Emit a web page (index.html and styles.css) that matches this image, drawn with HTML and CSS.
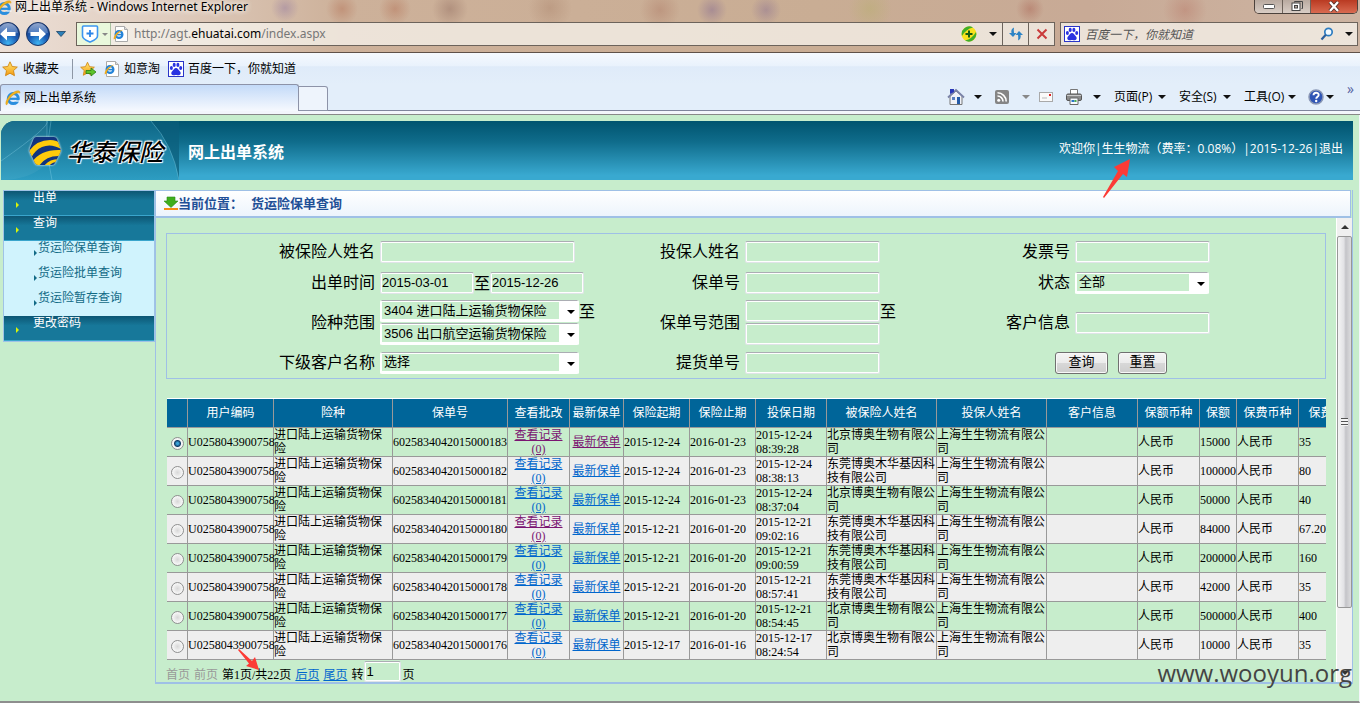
FILE: index.html
```html
<!DOCTYPE html>
<html lang="zh-CN">
<head>
<meta charset="utf-8">
<title>网上出单系统</title>
<link rel="stylesheet" href="styles.css">
</head>
<body>
<svg class="defs" aria-hidden="true">
  <defs>
    <radialGradient id="orb" cx="50%" cy="90%" r="90%"><stop offset="0" stop-color="#3fb4f2"/><stop offset=".45" stop-color="#1c5db5"/><stop offset="1" stop-color="#16357a"/></radialGradient>
    <linearGradient id="gloss" x1="0" y1="0" x2="0" y2="1"><stop offset="0" stop-color="#d5e2f5"/><stop offset="1" stop-color="#5d87c8"/></linearGradient>
    <linearGradient id="gold" x1="0" y1="0" x2="0" y2="1"><stop offset="0" stop-color="#ffe873"/><stop offset="1" stop-color="#f39a12"/></linearGradient>
    <symbol id="ie" viewBox="0 0 16 16">
      <circle cx="8.3" cy="8.6" r="5" fill="none" stroke="#2a8ede" stroke-width="3"/>
      <path d="M5 8.8h8.6" stroke="#2a8ede" stroke-width="2.2"/>
      <path d="M10.5 11h5" stroke="#fff" stroke-width="1.2"/>
      <path d="M1.2 14.8C-.5 12 4 4.500 9 2c3-1.600 6.500-1.800 6 1.200C12 1 3.500 7.500 2.800 12.500c-.2 1.200 0 2-1.600 2.300z" fill="#f4b51e" stroke="#c98a10" stroke-width=".4"/>
    </symbol>
    <symbol id="iepage" viewBox="0 0 16 16">
      <path d="M2.500.5h9l3 3v12h-12z" fill="#fff" stroke="#aaa"/><path d="M11.500.5v3h3" fill="#ddd" stroke="#aaa"/>
      <circle cx="6" cy="8.500" r="3.400" fill="none" stroke="#2383d8" stroke-width="2.200"/><path d="M4 8.600h5.600" stroke="#2383d8" stroke-width="1.600"/>
      <path d="M.8 13.500C0 10 4 5 10.500 3.500 6 6 3 9 2.500 12.500z" fill="#f0aa18"/>
    </symbol>
    <symbol id="star" viewBox="0 0 16 16"><path d="M8 .8l2.200 4.700 5.100.6-3.800 3.500 1 5.100L8 12.200l-4.500 2.500 1-5.100L.7 6.100l5.100-.6z" fill="url(#gold)" stroke="#d18714" stroke-width=".9"/></symbol>
    <symbol id="paw" viewBox="0 0 16 16"><rect x=".5" y=".5" width="15" height="15" fill="#fff" stroke="#2a35c8"/><g fill="#2932e1"><ellipse cx="3.400" cy="7" rx="1.500" ry="2"/><ellipse cx="6.200" cy="3.900" rx="1.500" ry="2.100"/><ellipse cx="9.900" cy="3.900" rx="1.500" ry="2.100"/><ellipse cx="12.700" cy="7" rx="1.500" ry="2"/><path d="M8 7c1.800 0 2.400 2 4 3.500 1.300 1.300.8 3.700-1.200 3.700-1.200 0-1.800-.3-2.800-.3s-1.600.3-2.800.3c-2 0-2.500-2.400-1.200-3.700C5.600 9 6.200 7 8 7z"/></g></symbol>
  </defs>
</svg>

<div class="browser">
  <div class="glass">
    <div class="titlebar">
      <svg class="i16 title-icon"><use href="#ie"/></svg>
      <span class="title-text">网上出单系统 - Windows Internet Explorer</span>
      <div class="winbtns">
        <button class="win" aria-label="最小化"><svg width="12" height="6"><rect x=".5" y=".5" width="11" height="4" rx="1" fill="#fff" stroke="#555"/></svg></button>
        <button class="win" aria-label="还原"><svg width="12" height="11"><path d="M3.500 1.500v-1h8v7h-1" fill="none" stroke="#444"/><rect x="1" y="2" width="8" height="7.500" fill="#fff" stroke="#444"/><rect x="3.500" y="4.500" width="3" height="2.500" fill="#b9aaa0" stroke="#444"/></svg></button>
        <button class="win close" aria-label="关闭"><svg width="12" height="11"><path d="M2 1l8 9M10 1L2 10" stroke="#56322c" stroke-width="4"/><path d="M2 1l8 9M10 1L2 10" stroke="#fff" stroke-width="2.300"/></svg></button>
      </div>
    </div>
    <div class="navbar">
      <button class="orb back" aria-label="后退"><svg width="26" height="26" viewBox="0 0 26 26"><circle cx="13" cy="13" r="11.500" fill="url(#orb)" stroke="#1c3766"/><path d="M3 12a10 10 0 0 1 20 0q-10 2-20 0z" fill="url(#gloss)" opacity=".65"/><path d="M5 13l7-6.500v4.500h8.500v4H12v4.500z" fill="#fff"/></svg></button>
      <button class="orb" aria-label="前进"><svg width="26" height="26" viewBox="0 0 26 26"><circle cx="13" cy="13" r="11.500" fill="url(#orb)" stroke="#1c3766"/><path d="M3 12a10 10 0 0 1 20 0q-10 2-20 0z" fill="url(#gloss)" opacity=".65"/><path d="M21 13l-7-6.500v4.500H5.500v4H14v4.500z" fill="#fff"/></svg></button>
      <svg class="history" width="10" height="6"><path d="M.5.5h9L5 5.500z" fill="#2b7fb8" stroke="#1c4466" stroke-width=".8"/></svg>
      <div class="address">
        <span class="shield"><svg width="18" height="18" viewBox="0 0 18 18"><path d="M2.500 1h13q1 0 1 1v9c0 3-4 4.500-7.500 6-3.500-1.500-7.500-3-7.500-6V2q0-1 1-1z" fill="#fff" stroke="#3c96f0" stroke-width="1.600"/><path d="M9 5v7M5.500 8.500h7" stroke="#2c86e8" stroke-width="1.800"/></svg><i class="tri small dim"></i></span>
        <svg class="i16"><use href="#iepage"/></svg>
        <span class="url" role="textbox" aria-label="地址">http://agt.<b>ehuatai.com</b>/index.aspx</span>
        <svg class="i16 boost" viewBox="0 0 16 16"><circle cx="8" cy="8" r="7.500" fill="#f7e11c"/><path d="M1 10A7.500 7.500 0 0 1 12 1.500Q5 3 1 10zM15 6a7.500 7.500 0 0 1-11 8.500Q11 13 15 6z" fill="#3fae2a"/><path d="M8 4.500v7M4.500 8h7" stroke="#155c12" stroke-width="2"/></svg>
        <i class="tri addr-drop"></i>
        <button class="cell" aria-label="刷新"><svg width="16" height="16" viewBox="0 0 16 16"><path d="M6 1.500Q2.500 3 3.500 7H1l4 4 3.500-4H6Q5.500 4 6 1.500z" fill="#2d84c6"/><path d="M10 14.500Q13.500 13 12.500 9H15l-4-4-3.500 4H10Q10.500 12 10 14.500z" fill="#2d84c6"/></svg></button>
        <button class="cell" aria-label="停止"><svg width="12" height="12"><path d="M1.500 1.500l9 9M10.500 1.500l-9 9" stroke="#c93a3a" stroke-width="2"/></svg></button>
      </div>
      <div class="search">
        <svg class="i16"><use href="#paw"/></svg>
        <input class="search-input" type="text" placeholder="百度一下，你就知道" aria-label="搜索">
        <svg width="14" height="14" viewBox="0 0 14 14"><circle cx="8.500" cy="5" r="3.700" fill="#f4faff" stroke="#2d7cc0" stroke-width="1.700"/><path d="M5.800 7.800L1.500 12.500" stroke="#2d5f9c" stroke-width="2.200"/></svg>
        <i class="tri"></i>
      </div>
    </div>
  </div>
  <div class="favorites">
    <svg class="i16"><use href="#star"/></svg><span class="fav-label">收藏夹</span>
    <span class="divider"></span>
    <svg class="i16" viewBox="0 0 16 16"><use href="#star" width="15" height="16"/><path d="M6 9.500h5V7l5 4-5 4v-2.500H6z" fill="#5dc32c" stroke="#267d16" stroke-width=".8"/></svg>
    <a class="fav" href="#"><svg class="i16"><use href="#iepage"/></svg>如意淘</a>
    <a class="fav" href="#"><svg class="i16"><use href="#paw"/></svg>百度一下，你就知道</a>
  </div>
  <div class="tabs">
    <button class="tab"><svg class="i16"><use href="#ie"/></svg>网上出单系统</button>
    <button class="newtab" aria-label="新选项卡"></button>
    <div class="commands">
      <button class="cmd wide" aria-label="主页"><svg width="18" height="18" viewBox="0 0 18 18"><path d="M3 8v8.500h12V8L9 3z" fill="#f0f2f8" stroke="#777"/><path d="M1 9.500L9 2l8 7.500" fill="none" stroke="#7b83a8" stroke-width="1.800"/><path d="M3 1h4v3L3 6z" fill="#2a39b8"/><rect x="5" y="9" width="3" height="3" fill="#5b7fc0"/><rect x="10" y="9" width="3" height="7" fill="#245ba8"/></svg><i class="tri"></i></button>
      <button class="cmd wide feed" aria-label="源"><svg width="14" height="14" viewBox="0 0 14 14"><rect width="14" height="14" rx="2" fill="#858585"/><circle cx="3.700" cy="10.300" r="1.500" fill="#fff"/><path d="M2.500 6a5.500 5.500 0 0 1 5.500 5.500M2.500 2.800a8.700 8.700 0 0 1 8.700 8.700" fill="none" stroke="#fff" stroke-width="1.600"/></svg><i class="tri dim"></i></button>
      <button class="cmd" aria-label="阅读邮件"><svg width="14" height="10"><rect x=".5" y=".5" width="13" height="9" fill="#fafafa" stroke="#a9a9a9"/><rect x="10" y="2" width="2" height="2" fill="#e02222"/><path d="M3 6h5" stroke="#bbb"/></svg></button>
      <button class="cmd wide" aria-label="打印"><svg width="16" height="16" viewBox="0 0 16 16"><path d="M4.500.5h7v6h-7z" fill="#fff" stroke="#777"/><rect x=".5" y="5" width="15" height="6.500" rx="1.500" fill="#8b8b8b" stroke="#555"/><path d="M1 6.500h14" stroke="#c9c9c9"/><path d="M4 9h8v6.500H4z" fill="#f7fbff" stroke="#666"/><path d="M5.500 12h3" stroke="#2b74c8" stroke-width="2"/><path d="M8.500 12h2" stroke="#4caf50" stroke-width="2"/></svg><i class="tri"></i></button>
      <button class="cmd text">页面(P)<i class="tri"></i></button>
      <button class="cmd text">安全(S)<i class="tri"></i></button>
      <button class="cmd text">工具(O)<i class="tri"></i></button>
      <button class="cmd help" aria-label="帮助"><svg width="16" height="16" viewBox="0 0 16 16"><circle cx="8" cy="8" r="7" fill="#2f55b5" stroke="#8a97b5" stroke-width="1.500"/><path d="M5.500 6.200C5.500 3 10.700 3 10.700 6c0 1.800-2.500 1.800-2.500 3.800" fill="none" stroke="#fff" stroke-width="1.900"/><circle cx="8.200" cy="12" r="1.200" fill="#fff"/></svg><i class="tri"></i></button>
      <span class="more">»</span>
    </div>
  </div>
</div>

<div class="page">
  <header class="banner">
    <div class="logo">
      <svg class="swoosh" viewBox="0 0 178 59" preserveAspectRatio="none"><path d="M0 0H46V42Q30 59 0 59z" fill="#fff" opacity=".05"/><path d="M150 0Q172 24 178 59V0z" fill="#04506c" opacity=".55"/><path d="M150 0Q172 24 178 59M46 0V22M0 40Q50 5 46 0M51 59Q44 30 50 0" fill="none" stroke="#8fd6ea" stroke-width="1" opacity=".35"/></svg>
      <svg class="mark" width="32" height="30" viewBox="0 0 32 30"><defs><clipPath id="hex"><path d="M7 1h18q2 0 3 2l3.500 10q.5 2-.5 4l-5 10q-1 2-3 2H9q-2 0-3-2L.8 16q-.6-1.500 0-3.500L4.500 3Q5.500 1 7 1z"/></clipPath></defs><g clip-path="url(#hex)"><rect width="32" height="30" fill="#11357f"/><path d="M0 15Q8 4 21 4Q28 4 32 8V13Q22 7 13 11Q6 14 2 22z" fill="#fecb0b"/><path d="M3 26Q12 13 32 14V20Q17 19 10 30H4z" fill="#fecb0b"/><path d="M15 30Q20 23 30 23L28 26Q23 26 20 30z" fill="#fecb0b"/></g></svg>
      <span class="brand">华泰保险</span>
    </div>
    <h1 class="system">网上出单系统</h1>
    <div class="user">欢迎你|生生物流（费率：0.08%）|2015-12-26|<a href="#">退出</a></div>
    <svg class="note note-user" width="28" height="40" viewBox="0 0 28 40"><path d="M27 0L11 8l4 4L0 38l1 1L20 15l4 3z" fill="#fc3b36"/></svg>
  </header>

  <div class="columns">
    <nav class="menu">
      <a class="group" href="#">出单</a>
      <a class="group" href="#">查询</a>
      <a class="sub" href="#">货运险保单查询</a>
      <a class="sub" href="#">货运险批单查询</a>
      <a class="sub" href="#">货运险暂存查询</a>
      <a class="group" href="#">更改密码</a>
    </nav>

    <main class="panel">
      <div class="crumb">
        <svg width="14" height="15" viewBox="0 0 14 15"><path d="M3 1h8v4h3L7 11.500 0 5h3z" fill="#3fae1c" stroke="#2c8a14" stroke-width=".6"/><path d="M0 13h14" stroke="#f38b12" stroke-width="2"/></svg>
        <span>当前位置：</span><span class="here">货运险保单查询</span>
      </div>
      <div class="scroller">
        <div class="content">
          <form class="filters">
            <label for="insured">被保险人姓名</label><div><input class="box long" id="insured" type="text"></div>
            <label for="holder">投保人姓名</label><div><input class="box" id="holder" type="text"></div>
            <label for="invoice">发票号</label><div><input class="box" id="invoice" type="text"></div>

            <label for="from">出单时间</label><div class="line"><input class="box date" id="from" type="text" value="2015-03-01"><span class="to">至</span><input class="box date" type="text" value="2015-12-26" aria-label="截止时间"></div>
            <label for="policy">保单号</label><div><input class="box" id="policy" type="text"></div>
            <label for="state">状态</label><div><span class="drop short"><select id="state"><option>全部</option></select></span></div>

            <label for="kind">险种范围</label><div class="stack"><div class="line"><span class="drop"><select id="kind"><option>3404 进口陆上运输货物保险</option></select></span><span class="to">至</span></div><span class="drop"><select aria-label="险种范围止"><option>3506 出口航空运输货物保险</option></select></span></div>
            <label for="pfrom">保单号范围</label><div class="stack"><div class="line"><input class="box" id="pfrom" type="text"><span class="to">至</span></div><input class="box" type="text" aria-label="保单号范围止"></div>
            <label for="info">客户信息</label><div><input class="box" id="info" type="text"></div>

            <label for="client">下级客户名称</label><div><span class="drop"><select id="client"><option>选择</option></select></span></div>
            <label for="bill">提货单号</label><div><input class="box" id="bill" type="text"></div>
            <div class="actions"><button class="push" type="button">查询</button><button class="push" type="reset">重置</button></div>
          </form>

          <div class="grid-wrap">
          <table class="grid">
            <colgroup><col class="w-pick"><col class="w-user"><col class="w-kind"><col class="w-no"><col class="w-log"><col class="w-new"><col class="w-day"><col class="w-day"><col class="w-time"><col class="w-name"><col class="w-name"><col class="w-info"><col class="w-cur"><col class="w-sum"><col class="w-cur"><col class="w-fee"></colgroup>
            <thead><tr><th></th><th>用户编码</th><th>险种</th><th>保单号</th><th>查看批改</th><th>最新保单</th><th>保险起期</th><th>保险止期</th><th>投保日期</th><th>被保险人姓名</th><th>投保人姓名</th><th>客户信息</th><th>保额币种</th><th>保额</th><th>保费币种</th><th>保费</th></tr></thead>
            <tbody>
              <tr><td class="c"><input type="radio" name="row" aria-label="选择 183" checked></td><td>U0258043900758</td><td>进口陆上运输货物保险</td><td>6025834042015000183</td><td class="c"><a class="seen" href="#">查看记录<br>(0)</a></td><td class="c"><a class="seen" href="#">最新保单</a></td><td>2015-12-24</td><td>2016-01-23</td><td>2015-12-24 08:39:28</td><td>北京博奥生物有限公司</td><td>上海生生物流有限公司</td><td></td><td>人民币</td><td>15000</td><td>人民币</td><td>35</td></tr>
              <tr><td class="c"><input type="radio" name="row" aria-label="选择 182"></td><td>U0258043900758</td><td>进口陆上运输货物保险</td><td>6025834042015000182</td><td class="c"><a href="#">查看记录<br>(0)</a></td><td class="c"><a href="#">最新保单</a></td><td>2015-12-24</td><td>2016-01-23</td><td>2015-12-24 08:38:13</td><td>东莞博奥木华基因科技有限公司</td><td>上海生生物流有限公司</td><td></td><td>人民币</td><td>100000</td><td>人民币</td><td>80</td></tr>
              <tr><td class="c"><input type="radio" name="row" aria-label="选择 181"></td><td>U0258043900758</td><td>进口陆上运输货物保险</td><td>6025834042015000181</td><td class="c"><a href="#">查看记录<br>(0)</a></td><td class="c"><a href="#">最新保单</a></td><td>2015-12-24</td><td>2016-01-23</td><td>2015-12-24 08:37:04</td><td>北京博奥生物有限公司</td><td>上海生生物流有限公司</td><td></td><td>人民币</td><td>50000</td><td>人民币</td><td>40</td></tr>
              <tr><td class="c"><input type="radio" name="row" aria-label="选择 180"></td><td>U0258043900758</td><td>进口陆上运输货物保险</td><td>6025834042015000180</td><td class="c"><a class="seen" href="#">查看记录<br>(0)</a></td><td class="c"><a href="#">最新保单</a></td><td>2015-12-21</td><td>2016-01-20</td><td>2015-12-21 09:02:16</td><td>东莞博奥木华基因科技有限公司</td><td>上海生生物流有限公司</td><td></td><td>人民币</td><td>84000</td><td>人民币</td><td>67.20</td></tr>
              <tr><td class="c"><input type="radio" name="row" aria-label="选择 179"></td><td>U0258043900758</td><td>进口陆上运输货物保险</td><td>6025834042015000179</td><td class="c"><a href="#">查看记录<br>(0)</a></td><td class="c"><a href="#">最新保单</a></td><td>2015-12-21</td><td>2016-01-20</td><td>2015-12-21 09:00:59</td><td>东莞博奥木华基因科技有限公司</td><td>上海生生物流有限公司</td><td></td><td>人民币</td><td>200000</td><td>人民币</td><td>160</td></tr>
              <tr><td class="c"><input type="radio" name="row" aria-label="选择 178"></td><td>U0258043900758</td><td>进口陆上运输货物保险</td><td>6025834042015000178</td><td class="c"><a href="#">查看记录<br>(0)</a></td><td class="c"><a href="#">最新保单</a></td><td>2015-12-21</td><td>2016-01-20</td><td>2015-12-21 08:57:41</td><td>东莞博奥木华基因科技有限公司</td><td>上海生生物流有限公司</td><td></td><td>人民币</td><td>42000</td><td>人民币</td><td>35</td></tr>
              <tr><td class="c"><input type="radio" name="row" aria-label="选择 177"></td><td>U0258043900758</td><td>进口陆上运输货物保险</td><td>6025834042015000177</td><td class="c"><a href="#">查看记录<br>(0)</a></td><td class="c"><a href="#">最新保单</a></td><td>2015-12-21</td><td>2016-01-20</td><td>2015-12-21 08:54:45</td><td>北京博奥生物有限公司</td><td>上海生生物流有限公司</td><td></td><td>人民币</td><td>500000</td><td>人民币</td><td>400</td></tr>
              <tr><td class="c"><input type="radio" name="row" aria-label="选择 176"></td><td>U0258043900758</td><td>进口陆上运输货物保险</td><td>6025834042015000176</td><td class="c"><a href="#">查看记录<br>(0)</a></td><td class="c"><a href="#">最新保单</a></td><td>2015-12-17</td><td>2016-01-16</td><td>2015-12-17 08:24:54</td><td>北京博奥生物有限公司</td><td>上海生生物流有限公司</td><td></td><td>人民币</td><td>10000</td><td>人民币</td><td>35</td></tr>
            </tbody>
          </table>
          </div>
          <div class="pager">
            <span class="off">首页</span><span class="off">前页</span><span>第1页/共22页</span><a href="#">后页</a><a href="#">尾页</a><label for="goto">转</label><input class="box goto" id="goto" type="text" value="1"><span>页</span>
            <svg class="note note-pager" width="22" height="22" viewBox="0 0 22 22"><path d="M0 1L1 0l13 12 3-4 4 13-13-4 3-2.500z" fill="#fc3b36"/></svg>
          </div>
        </div>
        <div class="scrollbar" aria-hidden="true">
          <i class="arrow up"></i>
          <div class="track"><div class="thumb"><i class="grip"></i></div></div>
          <i class="arrow down"></i>
        </div>
      </div>
    </main>
  </div>
  <div class="watermark">www.wooyun.org</div>
</div>
</body>
</html>
```
FILE: styles.css
```css
* { box-sizing: border-box; }
body {
  margin: 0;
  min-height: 100vh;
  display: flex;
  flex-direction: column;
  background: #c7edcc;
  font: 12px/16px "Open Sans", "Noto Sans CJK SC", sans-serif;
  color: #000;
  overflow-x: hidden;
}
button { font: inherit; color: inherit; padding: 0; border: 0; background: none; }
a { color: inherit; text-decoration: none; }
svg { flex: none; display: block; }
.defs { position: absolute; width: 0; height: 0; }
.i16 { width: 16px; height: 16px; }
.tri { flex: none; width: 0; height: 0; border: 4px solid transparent; border-top-color: #111; border-bottom: 0; }
.tri.dim { border-top-color: #888; }
.tri.small { border-width: 3px 3px 0; }

/* browser frame */
.glass {
  background:
    radial-gradient(circle at 285px 8px, #8e74a070, transparent 14px),
    radial-gradient(circle at 342px 9px, #b0684c68, transparent 16px),
    radial-gradient(circle at 395px 9px, #b0684c68, transparent 16px),
    radial-gradient(circle at 450px 9px, #8a645868, transparent 18px),
    radial-gradient(circle at 550px 8px, #a8806868, transparent 22px),
    radial-gradient(circle at 660px 10px, #a8705c60, transparent 20px),
    radial-gradient(circle at 712px 10px, #7a60906c, transparent 15px),
    radial-gradient(circle at 766px 10px, #7a609060, transparent 15px),
    radial-gradient(circle at 870px 9px, #b4b06868, transparent 22px),
    radial-gradient(circle at 1030px 9px, #a8605070, transparent 14px),
    radial-gradient(circle at 1185px 10px, #b0605050, transparent 22px),
    linear-gradient(90deg, #ecdfd6, #e0cdbf 12%, #cdb19a 25%, #c9ad94 60%, #c8aa96 80%, #cdb4a2);
  border-bottom: 1px solid #5f5148;
}
.titlebar { display: flex; height: 16px; align-items: flex-start; }
.title-icon { margin-left: -4px; }
.title-text { margin-left: 3px; font: 12px/14px "Noto Sans", "Noto Sans CJK SC", sans-serif; text-shadow: 0 0 6px #fff, 0 0 6px #fff; }
.winbtns { margin: 0 2px 0 auto; display: flex; border: 1px solid #4c423c; border-top: 0; border-radius: 0 0 5px 5px; overflow: hidden; }
.win { width: 28px; height: 13px; display: flex; justify-content: center; align-items: center; background: linear-gradient(#b9aaa0, #d9cdc5); border-right: 1px solid #6d625a; }
.win.close { width: 46px; border: 0; background: linear-gradient(#b93a22, #d96a50); }
.navbar { display: flex; align-items: center; height: 36px; padding-right: 2px; }
.orb { margin-right: 4px; }
.orb.back { margin-left: -5px; }
.history { margin: 0 10px 0 1px; }
.address, .search { display: flex; align-items: center; height: 24px; border: 1px solid #6c635b; background: #f7f4eebf; }
.address { flex: 1; }
.shield { display: flex; align-items: center; align-self: stretch; gap: 3px; width: 34px; padding-left: 4px; margin-right: 2px; background: #e9f8dc; border-right: 1px solid #a9c2a0; }
.url { flex: 1; margin-left: 5px; font: 12px/16px "Noto Sans", sans-serif; color: #777; }
.url b { font-weight: 400; color: #000; }
.boost { margin-right: 12px; }
.addr-drop { margin-right: 5px; }
.cell { width: 26px; align-self: stretch; display: flex; align-items: center; justify-content: center; border-left: 1px solid #6c635b; }
.search { width: 298px; margin-left: 5px; padding: 0 4px 0 3px; gap: 5px; }
.search > .tri { margin-left: 6px; }
.search-input { flex: 1; min-width: 0; border: 0; padding: 0; background: none; font: italic 12px/16px "Noto Sans CJK SC", sans-serif; }
.search-input::placeholder { color: #555; }
.favorites { display: flex; align-items: center; height: 31px; padding-left: 2px; background: linear-gradient(#f5f9fe, #e9f2fc 42%, #dfebf9 44%, #e3eefa); }
.fav-label { margin-left: 5px; }
.divider { width: 1px; height: 20px; margin: 0 7px 0 13px; background: #8d97a5; }
.fav { display: flex; align-items: center; gap: 4px; margin-left: 8px; }
.tabs { display: flex; align-items: flex-end; height: 31px; background: linear-gradient(#e3eefa 26px, #7f849c 26px, #7f849c 27px, #f3f5fb 27px, #f3f5fb 30px, #999 30px, #777 31px); padding-bottom: 4px; }
.tab { width: 299px; height: 27px; padding-left: 4px; display: flex; align-items: center; gap: 3px; border: 1px solid #8d93a8; border-bottom: 0; border-radius: 3px 3px 0 0; background: linear-gradient(#c3daf8, #f6f9fe); }
.newtab { width: 29px; height: 25px; border: 1px solid #8d93a8; border-left: 0; border-radius: 0 3px 0 0; background: #eef4fc; }
.commands { margin-left: auto; display: flex; height: 28px; align-items: center; }
.cmd { display: flex; align-items: center; justify-content: space-between; margin-right: 13px; }
.cmd.wide { width: 35px; }
.cmd.feed { margin-right: 9px; }
.cmd.text { width: 52px; }
.cmd.help { width: 26px; margin-left: -1px; }
.more { width: 13px; align-self: flex-start; line-height: 12px; font-size: 14px; color: #5560a0; }

/* application page */
.page { position: relative; flex: 1; display: flex; flex-direction: column; padding: 6px 6px 17px 1px; border-right: 1px solid #f4f6fa; border-bottom: 2px solid #8e8e8e; }
.banner { position: relative; display: flex; align-items: center; height: 59px; border-radius: 14px 0 0 0; background: linear-gradient(#00546f, #0f6c8b 35%, #39a9d0 92%); color: #fff; }
.logo { position: relative; display: flex; align-items: center; align-self: stretch; width: 178px; padding-left: 28px; border-radius: 14px 0 0 0; overflow: hidden; background: linear-gradient(#0d6685, #2d9dc2); }
.swoosh { position: absolute; inset: 0; width: 100%; height: 100%; }
.mark { position: relative; filter: drop-shadow(0 0 1px #fff); }
.brand { position: relative; margin-left: 6px; font: italic 500 24px/32px "Noto Sans CJK SC", sans-serif; color: #000; text-shadow: 1px 1px 1px #fff, -1px -1px 1px #fff, 1px -1px 1px #fff, -1px 1px 1px #fff; }
.system { margin: 0 0 0 9px; font: bold 16px/24px "Noto Sans CJK SC", sans-serif; }
.user { margin: 0 10px 4px auto; }
.note { position: absolute; pointer-events: none; }
.note-user { right: 222px; top: 38px; z-index: 2; }
.columns { flex: 1; display: flex; align-items: flex-start; padding: 10px 0 0 2px; }
.menu { flex: none; width: 152px; border: 1px solid #9fc3e6; font-family: "Noto Sans CJK SC", sans-serif; }
.menu a { display: block; position: relative; height: 25px; line-height: 12px; }
.group { padding-left: 29px; color: #fff; background: linear-gradient(#0c5673, #17789a 40%, #17789a); border-bottom: 1px solid #3aa5cc; }
.sub { padding-left: 34px; color: #126a86; background: #d0f3fd; }
.menu a::before { content: ""; position: absolute; left: 12px; top: 11px; border: 3px solid transparent; border-left-color: #d8f20a; border-right: 0; }
.menu .sub::before { left: 30px; top: 9px; border-left-color: #126a86; }
.panel { flex: 1; align-self: stretch; min-width: 0; display: flex; flex-direction: column; border: 1px solid #9fc0e6; border-top: 0; border-bottom-width: 2px; }
.crumb { display: flex; align-items: center; height: 28px; margin-right: 1px; padding: 0 8px 1px; border: solid #9fc0e6; border-width: 1px 1px 2px 0; background: linear-gradient(#fff, #edf4fc); font: bold 13px/18px "Noto Sans CJK SC", sans-serif; color: #1f4f96; }
.here { margin-left: 8px; }
.scroller { flex: 1; display: flex; }
.content { flex: 1; min-width: 0; padding: 15px 10px 0 10px; }
.filters { display: grid; grid-template-columns: 208fr 260fr 95fr 220fr 100fr 250fr; grid-template-rows: 31px 31px 49px 31px; column-gap: 5px; align-items: center; padding-top: 2px; border: 1px solid #9fc0e6; font: 16px/20px "Noto Sans CJK SC", sans-serif; }
.filters > label { padding-bottom: 3px; text-align: right; white-space: nowrap; }
.filters .to { padding-bottom: 2px; }
.filters > div { display: flex; }
.filters .line { display: flex; align-items: center; }
.filters .stack { flex-direction: column; gap: 1px; }
.box { width: 135px; height: 22px; padding: 0 1px; border: 1px solid #e0e4e8; border-top-color: #abadb3; border-radius: 2px; background: #c7edcc; box-shadow: inset 0 0 0 1px #fff; font: 13px/16px "Liberation Sans", sans-serif; color: #000; }
.box.long { width: 195px; }
.box.date { width: 94px; }
.drop { position: relative; display: inline-block; width: 199px; height: 22px; }
.drop.short { width: 134px; }
.drop select { appearance: none; display: block; width: 100%; height: 22px; padding: 0 20px 0 2px; border: 2px solid #fff; border-top: 1px solid #abadb3; border-radius: 2px; background: linear-gradient(#c7edcc, #c7edcc) 0 1px / calc(100% - 18px) calc(100% - 2px) no-repeat padding-box #fff; font: 13px/18px "Liberation Sans", "Noto Sans CJK SC", sans-serif; color: #000; }
.drop::after { content: ""; position: absolute; right: 4px; top: 10px; border: 4px solid transparent; border-top-color: #000; border-bottom: 0; pointer-events: none; }
.filters > .actions { grid-column: 5 / 7; gap: 10px; padding-left: 85px; }
.push { width: 53px; height: 22px; padding-bottom: 4px; border: 1px solid #707070; border-radius: 3px; background: linear-gradient(#f4f4f4, #ebebeb 50%, #d8d8d8 50%, #cdcdcd); box-shadow: inset 0 0 0 1px #f8f8f8; font: 13px/16px "Noto Sans CJK SC", sans-serif; }
.push + .push { width: 49px; }
.grid-wrap { margin: 19px 0 0 1px; overflow: hidden; border-top: 1px solid #fff; }
.grid { width: 1176px; table-layout: fixed; border-collapse: separate; border-spacing: 0; font: 12px/14px "Liberation Serif", "Noto Sans CJK SC", serif; }
.grid th, .grid td { padding: 0; border: solid #999; border-width: 0 1px 1px 0; height: 29px; }
.grid th { background: #006599; color: #fff; font-weight: 400; }
.grid td { text-align: left; }
.grid .c { text-align: center; }
.grid tbody tr:nth-child(even) { background: #eee; }
.grid a, .pager a { color: #06c; text-decoration: underline; }
.grid a.seen { color: #7b1572; }
.grid input { display: block; margin: 2px auto 0; width: 13px; height: 13px; appearance: none; border: 1px solid #8e8f8f; border-radius: 50%; background: radial-gradient(circle, #d8d8d8, #f4f4f4 60%, #fff); }
.grid input:checked { background: radial-gradient(circle, #3aa3d8 1px, #123c66 3px, #f4f4f4 4px); }
.w-pick { width: 21px; }
.w-user { width: 86px; }
.w-kind { width: 119px; }
.w-no { width: 115px; }
.w-log { width: 62px; }
.w-new { width: 54px; }
.w-day { width: 66px; }
.w-time { width: 71px; }
.w-name { width: 110px; }
.w-info { width: 91px; }
.w-cur { width: 62px; }
.w-sum { width: 37px; }
.w-fee { width: 44px; }
.pager { position: relative; display: flex; align-items: flex-end; gap: 4px; height: 22px; font: 12px/14px "Liberation Serif", "Noto Sans CJK SC", serif; }
.off { color: #999; }
.box.goto { width: 37px; height: 21px; align-self: flex-start; margin: 1px -3px 0; }
.note-pager { left: 72px; top: -11px; }
.scrollbar { flex: none; width: 16px; display: flex; flex-direction: column; background: #f0f0f0; border-left: 1px solid #fff; }
.arrow { height: 18px; display: flex; align-items: center; justify-content: center; }
.arrow::before { content: ""; border: 4px solid transparent; }
.up::before { border-bottom-color: #333; border-top: 0; }
.down::before { border-top-color: #333; border-bottom: 0; }
.track { flex: 1; }
.thumb { height: 87%; display: flex; align-items: center; justify-content: center; border: 1px solid #979797; border-radius: 2px; background: linear-gradient(90deg, #f5f5f5, #e2e2e5 45%, #c4c4c8 60%, #dcdcde); }
.grip { width: 7px; height: 8px; background: repeating-linear-gradient(#555 0 1px, #f4f4f4 1px 3px); }
.watermark { position: absolute; right: 7px; bottom: 11px; font: 24px/34px "Open Sans", sans-serif; color: #444; }
```
